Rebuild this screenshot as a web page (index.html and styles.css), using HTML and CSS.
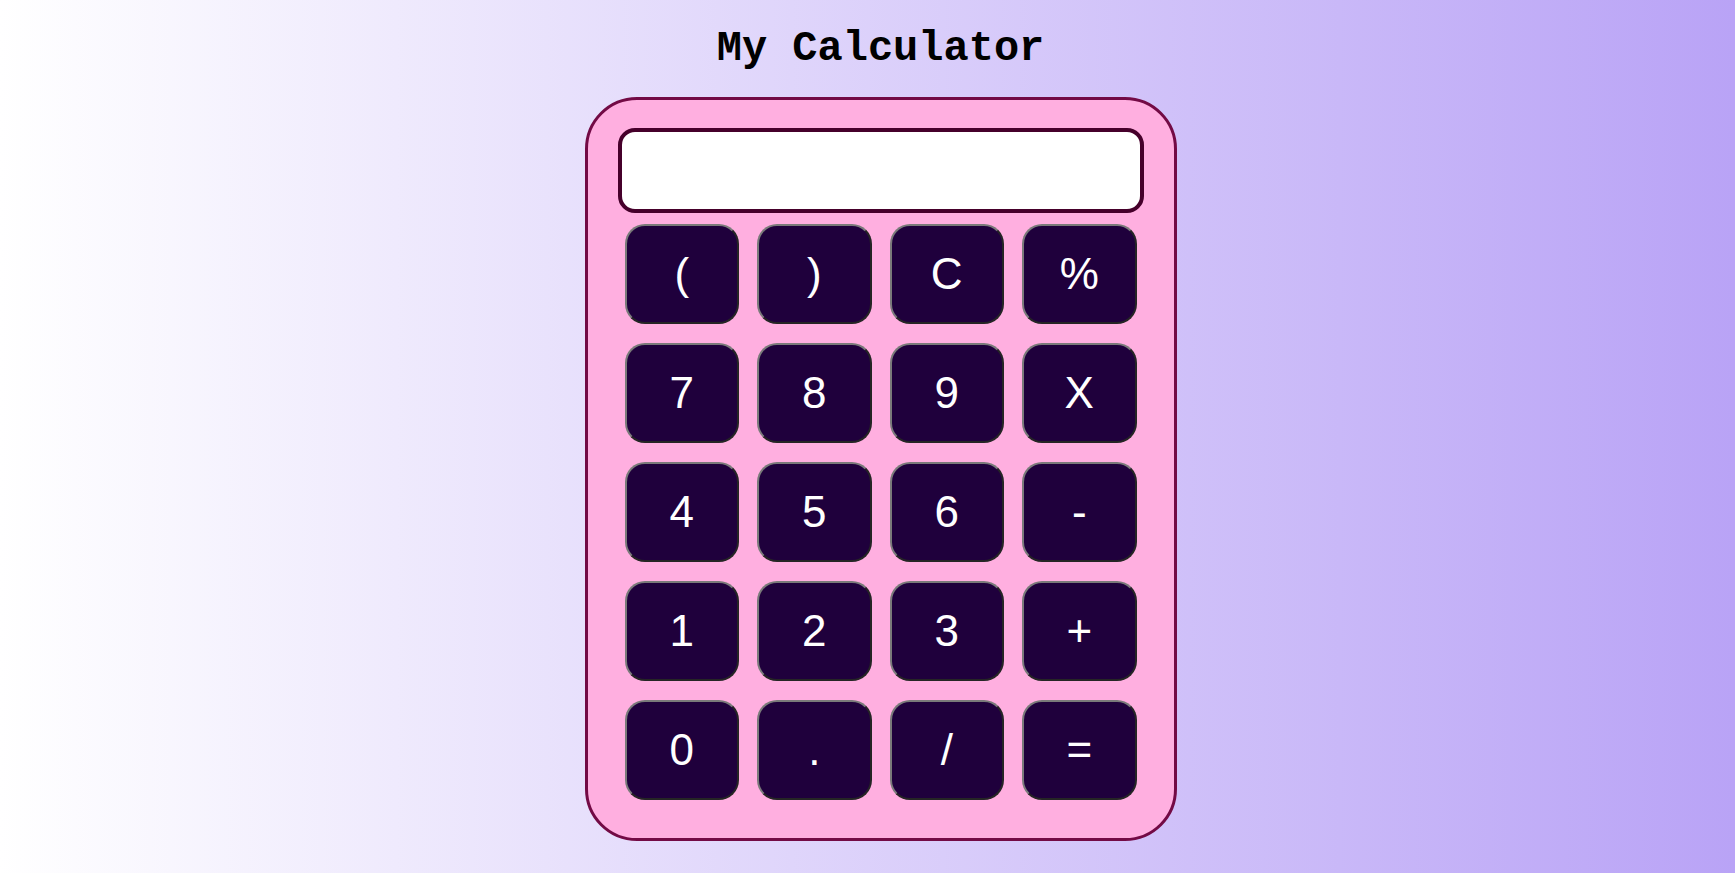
FILE: index.html
```html
<!DOCTYPE html>
<html>
<head>
<meta charset="utf-8">
<title>My Calculator</title>
<link rel="stylesheet" href="styles.css">
</head>
<body>
<div class="page">
  <h1 class="title">My Calculator</h1>
  <div class="calc">
    <input class="display" type="text" value="">
    <div class="keys">
      <button class="key">(</button>
      <button class="key">)</button>
      <button class="key">C</button>
      <button class="key">%</button>
      <button class="key">7</button>
      <button class="key">8</button>
      <button class="key">9</button>
      <button class="key">X</button>
      <button class="key">4</button>
      <button class="key">5</button>
      <button class="key">6</button>
      <button class="key">-</button>
      <button class="key">1</button>
      <button class="key">2</button>
      <button class="key">3</button>
      <button class="key">+</button>
      <button class="key">0</button>
      <button class="key">.</button>
      <button class="key">/</button>
      <button class="key">=</button>
    </div>
  </div>
</div>
</body>
</html>
```

FILE: styles.css
```css
html, body {
  margin: 0;
  height: 100%;
}
body {
  background: linear-gradient(to right, #ffffff 0%, #b9a3f6 100%);
  font-family: "Liberation Sans", Arial, sans-serif;
}
.page {
  display: flex;
  flex-direction: column;
  align-items: center;
  padding: 25px 0 0 26px;
}
.title {
  margin: 0;
  font-family: "Liberation Mono", "Courier New", monospace;
  font-weight: bold;
  font-size: 42px;
  line-height: normal;
  color: #000;
}
.calc {
  box-sizing: border-box;
  width: 592px;
  margin-top: 24px;
  padding: 28px 30px 38px;
  background: #ffafe0;
  border: 3px solid #730a45;
  border-radius: 52px;
}
.display {
  display: block;
  box-sizing: border-box;
  width: 100%;
  height: 85px;
  margin: 0;
  background: #fff;
  border: 4px solid #46002b;
  border-radius: 17px;
  outline: none;
}
.keys {
  display: grid;
  grid-template-columns: repeat(4, 1fr);
  grid-auto-rows: 100px;
  column-gap: 18px;
  row-gap: 19px;
  margin: 11px 7px 0;
}
.key {
  margin: 0;
  padding: 0;
  background: #1f003c;
  color: #fff;
  font-family: "Liberation Sans", Arial, sans-serif;
  font-size: 44px;
  border: 2px outset #7a7a7a;
  border-radius: 20px;
}
```
